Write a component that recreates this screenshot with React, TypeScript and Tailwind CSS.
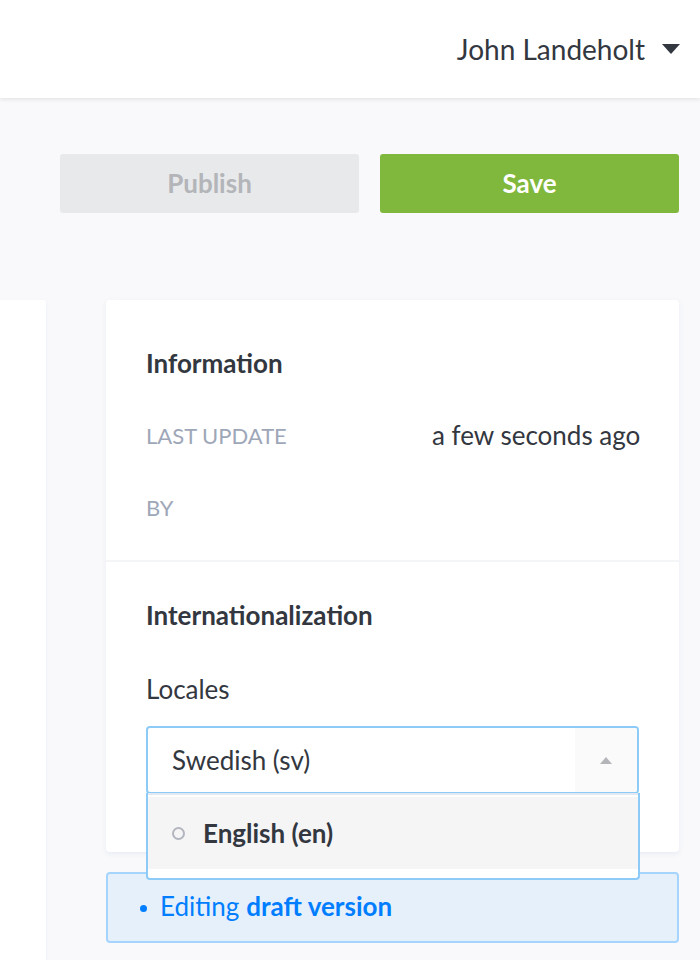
import React from "react";

const App = () => {
  return (
    <div className="w-[700px] h-[960px] overflow-hidden bg-[#f9f9fb] font-['Lato','Noto_Sans',sans-serif] relative">
      {/* Header */}
      <div className="h-[98px] bg-white shadow-[0_2px_4px_rgba(0,0,0,0.08)] flex items-center justify-end pr-5 relative z-10">
        <span className="text-[28px] text-[#333740] mr-[17px]">John Landeholt</span>
        <svg width="18" height="10" viewBox="0 0 18 10">
          <path d="M0 0 L18 0 L9 10 Z" fill="#333740" />
        </svg>
      </div>

      {/* Buttons */}
      <div className="flex gap-[21px] pl-[60px] pr-[21px] mt-[56px]">
        <button className="w-[299px] h-[59px] rounded-[3px] bg-[#e8e9eb] text-[#b3b5b9] font-bold text-[26px]">
          Publish
        </button>
        <button className="w-[299px] h-[59px] rounded-[3px] bg-[#7fb83c] text-white font-bold text-[26px]">
          Save
        </button>
      </div>

      <div className="flex mt-[87px]">
        {/* Left card */}
        <div className="w-[46px] h-[700px] bg-white rounded-tr-[3px] shadow-[0_2px_4px_rgba(227,233,243,0.6)]" />

        <div className="ml-[60px] w-[573px] relative">
          {/* Right card */}
          <div className="bg-white rounded-[4px] shadow-[0_2px_4px_rgba(227,233,243,0.8)]">
            <div className="px-10 pt-[47px] pb-[37px]">
              <h2 className="text-[26px] font-bold text-[#333740] leading-[32px]">Information</h2>
              <div className="flex items-center mt-[40px] h-[32px]">
                <span className="w-[286px] shrink-0 text-[22px] text-[#9ea7b8] uppercase">Last update</span>
                <span className="text-[26px] text-[#333740] whitespace-nowrap">a few seconds ago</span>
              </div>
              <div className="flex items-center mt-[40px] h-[32px]">
                <span className="text-[22px] text-[#9ea7b8] uppercase">By</span>
              </div>
            </div>
            <div className="h-[2px] bg-[#f4f5f7]" />
            <div className="px-10 pt-[37px] pb-[58px]">
              <h2 className="text-[26px] font-bold text-[#333740] leading-[32px]">Internationalization</h2>
              <div className="text-[26px] text-[#333740] mt-[42px] leading-[32px]">Locales</div>
              <div className="mt-[21px] h-[68px] border-2 border-[#8ccbf8] rounded-[4px] flex overflow-hidden">
                <div className="flex-1 flex items-center pl-[24px] text-[26px] text-[#333740]">Swedish (sv)</div>
                <div className="w-[62px] bg-[#fafafb] flex items-center justify-center">
                  <svg width="12" height="7" viewBox="0 0 12 7">
                    <path d="M0 7 L12 7 L6 0 Z" fill="#b3b5b9" />
                  </svg>
                </div>
              </div>
            </div>
          </div>

          {/* Draft banner */}
          <div className="mt-[20px] h-[71px] bg-[#e6f0fb] border-2 border-[#a5d5ff] rounded-[4px] flex items-center pl-[32px] pb-[3px] text-[26px] text-[#007eff]">
            <span className="w-[7px] h-[7px] rounded-full bg-[#007eff] mr-[13px] mt-[5px]" />
            <span>Editing</span>
            <span className="font-bold ml-[7px]">draft version</span>
          </div>

          {/* Dropdown menu */}
          <div className="absolute left-[40px] top-[493px] w-[494px] h-[87px] bg-white border-2 border-[#8ccbf8] border-t-0 rounded-b-[4px] z-20 overflow-hidden">
            <div className="h-[2px] bg-[#e3e9f3]" />
            <div className="mt-[2px] h-[72px] bg-[#f5f5f6] flex items-center pl-[24px]">
              <span className="w-[13px] h-[13px] rounded-full border-2 border-[#b3b5bf] mr-[18px]" />
              <span className="text-[26px] font-bold text-[#333740]">English (en)</span>
            </div>
          </div>
        </div>
      </div>
    </div>
  );
};

export default App;
